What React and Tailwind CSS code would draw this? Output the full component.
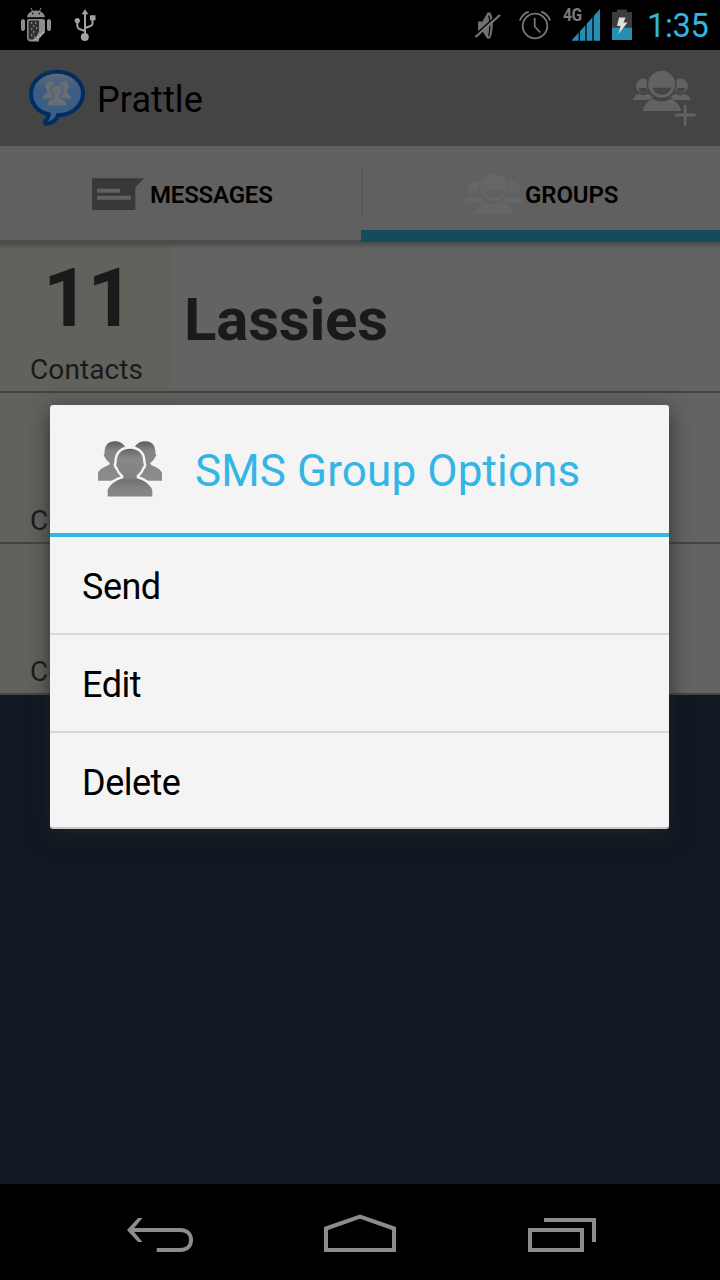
function PeopleIcon({ className, plus, fill, gap }) {
  return (
    <svg className={className} viewBox="632 68 64 60" width="64" height="60">
      <g fill={fill}>
        <circle cx="643.3" cy="85.8" r="7.3" />
        <circle cx="680.7" cy="85.8" r="7.3" />
        <path d="M632.500 100c2-5 6-6.300 7.500-6.300 3 2.300 5 2 7 0 3 .8 5 2 6 3l-3 3.300zM691 100c-2-5-6-6.300-7.500-6.300-3 2.300-5 2-7 0-3 .8-5 2-6 3l3 3.300z" />
        <circle cx="661.7" cy="84" r="15" fill={gap} />
        <circle cx="661.7" cy="84.2" r="13.500" />
        <path d="M643 111c1-6 5-11 10-12.300 5 3.500 12.500 3.500 17.500 0 5 1.300 9.500 6.300 10.500 12.300z" />
      </g>
      <g fill={gap}>
        <path d="M652.800 87.800h18.400c-1 4-4.500 7-9.200 7s-8.200-3-9.200-7zM638.500 88h8.200l1 3.300c-1 .8-2.500 1.200-4 1.200-2.700 0-4.700-2-5.200-4.500zM685.500 88h-8.200l-1 3.300c1 .8 2.500 1.200 4 1.200 2.700 0 4.700-2 5.200-4.500z" />
      </g>
      {plus && <path d="M675 115h20.500M685.200 105v20.700" stroke={fill} strokeWidth="2.800" />}
    </svg>
  );
}

function Trio({ className }) {
  return (
    <svg className={className} viewBox="0 0 64 57" width="64" height="57">
      <defs>
        <linearGradient id="trio-side" x1="0" y1="0" x2="0" y2="1">
          <stop offset="0" stopColor="#5e5e5e" />
          <stop offset=".25" stopColor="#858585" />
          <stop offset="1" stopColor="#8c8c8c" />
        </linearGradient>
        <linearGradient id="trio-front" x1="0" y1="0" x2="0" y2="1">
          <stop offset="0" stopColor="#666" />
          <stop offset=".2" stopColor="#888" />
          <stop offset=".6" stopColor="#828282" />
          <stop offset=".66" stopColor="#727272" />
          <stop offset=".85" stopColor="#848484" />
          <stop offset="1" stopColor="#888" />
        </linearGradient>
      </defs>
      <g fill="url(#trio-side)">
        <path d="M0 39.700v-8c2-4 6-5.500 11-8 1-.8 1-1.500 0-2.500-2-1.500-4-4-5-6.500-.5-1-.3-1.500.5-2C6.500 4 10 .3 16.500.3 21 .3 25 2 27 6v20l-3 13.700z" />
        <path d="M64 39.700v-8c-2-4-6-5.500-11-8-1-.8-1-1.500 0-2.500 2-1.500 4-4 5-6.500.5-1 .3-1.500-.5-2C57.500 4 54 .3 47.500.3 43 .3 39 2 37 6v20l3 13.700z" />
      </g>
      <path
        d="M9.700 55.500V49c2-5.500 8-9.500 14.800-11.500 1.200-1 1.200-2.200.5-3.200-3-2.500-4.500-5-5.500-8-1.500-1-1.700-3-.7-4.800C18.500 12.500 24 7.800 32 7.800S45.500 12.500 45.200 21.500c1 1.800.8 3.800-.7 4.800-1 3-2.500 5.500-5.500 8-.7 1-.7 2.200.5 3.200C46.300 39.500 52.300 43.500 54.300 49v6.500z"
        fill="url(#trio-front)"
        stroke="#f4f4f4"
        strokeWidth="5"
        paintOrder="stroke"
      />
    </svg>
  );
}

function StatusBar() {
  return (
    <header className="flex h-[50px] shrink-0 items-center bg-black">
      <svg width="110" height="50" viewBox="0 0 110 50">
        <g fill="#8c8c8c">
          <path d="M27 17.300c.5-4 4-6.800 9-6.800s8.500 2.800 9 6.800zM21 20.500q2-3 4 0v9q-2 3-4 0zM47 20.500q2-3 4 0v9q-2 3-4 0z" />
          <path d="M31 8l2 4M41 8l-2 4" stroke="#8c8c8c" strokeWidth="1" />
          <path d="M27 21q0-2 2-2h14q2 0 2 2v11l-6 7v2.500h-9q-3-1-3-4z" />
        </g>
        <path d="M30 20.500h9v11l-4 8h-5q-1.500 0-1.500-2V22q0-1.500 1.500-1.500z" fill="#303030" />
        <path d="M31 23h1.300M35 23h1.300M33 26h1.300M36 28h1.300M31 29h1.300M33 32h1.300M31 35h1.300M34 37h1.300" stroke="#999" strokeWidth="1.300" />
        <path d="M44 32l-11 9" stroke="#b0b0b0" strokeWidth="2" strokeDasharray="2.500 1" />
        <path d="M32 13.500h1.300M38.500 13.500h1.300" stroke="#000" strokeWidth="1.300" />
        <g fill="none" stroke="#a2a2a2" strokeWidth="2">
          <path d="M85 14v23M77.300 21v5q0 2 2 3l5.700 2M92.500 18v6q0 1-2 2L85 28" />
        </g>
        <path d="M85 9.300l3.500 5h-7zM90 15.300h5.500v5H90z" fill="#a2a2a2" />
        <circle cx="77.300" cy="20.500" r="2.600" fill="#a2a2a2" />
        <circle cx="84.800" cy="37" r="4" fill="#a2a2a2" />
      </svg>
      <div className="flex-1" />
      <svg width="88" height="50" viewBox="470 0 88 50">
        <path d="M478 21.500h4.500l5-9h3q2.500 5 2.300 13t-2.800 13h-3l-5-8h-4z" fill="#707070" />
        <path d="M488.500 15.500q1.500 3 1.300 10.500t-1.300 10" fill="none" stroke="#000" strokeWidth="1.200" />
        <path d="M474.500 35.500L499 13.500" stroke="#000" strokeWidth="1.500" />
        <path d="M475.500 37L500 15" stroke="#777" strokeWidth="2.200" />
        <g fill="none" stroke="#777" strokeWidth="1.800">
          <circle cx="535" cy="26" r="12.300" />
          <path d="M534.700 18v8.500l5.500 6M519.800 20.500q3-7 9-8.800M550.200 20.500q-3-7-9-8.800" />
        </g>
      </svg>
      <div className="flex w-[46px] items-start">
        <span className="ml-[5px] mt-[-1px] w-[22px] shrink-0 origin-left scale-x-[0.84] text-[18.5px] leading-[18px] font-bold tracking-[-0.5px] text-[#7b7b7b]">4G</span>
        <svg className="-ml-[14px] shrink-0" width="30" height="36" viewBox="571 7 30 36">
          <path d="M572 40.700V40L600 9v31.700z" fill="#278db3" />
          <path d="M579.300 30v11M586 20v21M593 15v26" stroke="#000" strokeWidth="1.300" />
        </svg>
      </div>
      <svg width="32" height="50" viewBox="604 0 32 50">
        <path d="M612 12h5V9.500h10V12h5v16h-20z" fill="#3c3c3c" />
        <path d="M612 27.700h20V40h-20z" fill="#278db3" />
        <path d="M619 17.500h6.500l-2 5h4l-9 11.500 2-8h-3.500z" fill="#dedede" />
      </svg>
      <span className="ml-[11px] mr-[12px] mt-[2px] w-[61px] whitespace-nowrap text-[32.500px] leading-[50px] tracking-[-0.3px] text-[#33b5e5]">1:35</span>
    </header>
  );
}

function ActionBar() {
  return (
    <div className="flex h-24 shrink-0 items-center bg-[#444]">
      <div className="ml-7 mt-[-1px] h-[58px] w-[58px]">
        <svg width="58" height="58" viewBox="28 69 58 58">
          <defs>
            <linearGradient id="bubble" x1="0" y1="0" x2="0" y2="1">
              <stop offset="0" stopColor="#626a76" />
              <stop offset=".35" stopColor="#3c5c83" />
              <stop offset="1" stopColor="#3a6384" />
            </linearGradient>
          </defs>
          <path d="M57 71.800c15 0 26 9.700 26 21.700s-11 21.500-25 21.800c-1 3-5 8-11.500 8.700-2 0-2-1.500-1-3 2.500-2.500 3.500-4.500 3.300-6.700C38 112.500 31 104 31 93.500c0-12 11-21.700 26-21.700z" fill="url(#bubble)" stroke="#002e63" strokeWidth="4" />
          <svg x="43" y="80.500" width="28" height="26" viewBox="0 0 64 57">
            <path fill="#696d72" d="M0 40v-6l10-8-5-12C6 4 11 .5 16.500.5S27 3 29 8h6c2-5 7-7.500 12.500-7.500S58 4 59 14l-5 12 10 8v6z" />
            <path fill="#696d72" stroke="#46617f" strokeWidth="3" d="M9.500 57v-7c3-7 9-9 14-11.500l1-4-5-8-.5-5C18.500 12 25 7.500 32 7.500S45.500 12 45 21.500l-.5 5-5 8 1 4c5 2.500 11 4.500 14 11.500v7z" />
          </svg>
        </svg>
      </div>
      <h1 className="ml-[11px] mt-[3px] flex-1 text-[36px] leading-[48px] tracking-[0.1px] text-black">Prattle</h1>
      <PeopleIcon className="mr-6" plus fill="#626262" gap="#444" />
    </div>
  );
}

function Tabs() {
  return (
    <nav className="flex h-24 shrink-0 bg-[#606060] text-[24px] font-semibold leading-[96px] text-black">
      <div className="flex w-[361px] items-center border-b-[2px] border-[#4d4d4d]">
        <svg className="ml-[92px] mt-[2px]" width="52" height="33" viewBox="92 178 52 33">
          <path d="M92 178.300h52l-8.700 9V210H92z" fill="#383838" />
          <path d="M97 190.800h23M97 197.800h34" stroke="#606060" strokeWidth="4" />
        </svg>
        <span className="ml-[6px] mt-[3px] tracking-[-0.2px]">MESSAGES</span>
      </div>
      <div className="flex flex-1 items-center border-b-[12px] border-[#164a5e]">
        <div className="mt-[12px] h-12 w-[2px] bg-[#575757]" />
        <PeopleIcon className="ml-[101px] mt-[26px] shrink-0" fill="#666" gap="#606060" />
        <span className="ml-[-3px] mt-[13px] tracking-[-0.1px]">GROUPS</span>
      </div>
    </nav>
  );
}

function GroupRow({ count, name }) {
  return (
    <li className="flex h-[151px] border-b-2 border-[#444]">
      <div className="flex w-[173px] flex-col bg-[#61625c] text-[#1a1a1a]">
        <b className="mt-[8px] h-[98px] pl-[43px] text-[81px] leading-[98px] tracking-[-2px]">{count}</b>
        <span className="mt-[1px] pl-[30px] text-[28px] leading-[42px] tracking-[0.1px]">Contacts</span>
      </div>
      <b className="flex-1 pl-[11px] text-[60px] leading-[155px] tracking-[-0.2px] text-[#1a1a1a]">{name}</b>
    </li>
  );
}

function Dialog() {
  return (
    <section className="absolute left-[50px] top-[405px] w-[619px] rounded-[3px] border-b-2 border-[#c8c9c8] bg-[#f4f4f4] shadow-[0_6px_20px_rgba(32,36,38,0.8)]">
      <div className="flex h-[132px] border-b-4 border-[#33b5e5]">
        <Trio className="ml-12 mt-[36px]" />
        <h2 className="ml-[33px] mt-[2px] whitespace-nowrap text-[44px] leading-[128px] tracking-[0.13px] text-[#33b5e5]">SMS Group Options</h2>
      </div>
      <ul className="text-[36px] leading-[100px] tracking-[-0.5px] text-black">
        <li className="h-[98px] border-b-2 border-[#d8d8d8] pl-8">Send</li>
        <li className="h-[98px] border-b-2 border-[#d8d8d8] pl-8">Edit</li>
        <li className="h-[94px] pl-8">Delete</li>
      </ul>
    </section>
  );
}

function NavBar() {
  return (
    <footer className="flex h-24 shrink-0 items-center bg-black">
      <svg width="720" height="96" viewBox="0 1184 720 96" fill="none" stroke="#8c8c8c" strokeWidth="4">
        <path d="M130 1230h50c8 0 11 5 11 10s-3 10-11 10h-23.300" />
        <path d="M138 1218h4.500l-10 12 10 12H138l-11-12z" fill="#8c8c8c" stroke="none" />
        <path d="M326 1250v-21.500l34-12 34 12V1250z" />
        <path d="M530 1230h52v20h-52zM544 1220h50v22" />
      </svg>
    </footer>
  );
}

export default function App() {
  return (
    <div className="relative flex h-[1280px] w-[720px] flex-col overflow-hidden bg-[#111822] font-[Roboto,sans-serif]">
      <StatusBar />
      <ActionBar />
      <Tabs />
      <main className="relative flex-1 bg-[#111822]">
        <div className="absolute inset-x-0 top-0 h-[7px] bg-linear-to-b from-black/25 to-transparent" />
        <ul className="bg-[#636361]">
          <GroupRow count="11" name="Lassies" />
          <GroupRow />
          <GroupRow />
        </ul>
      </main>
      <NavBar />
      <Dialog />
    </div>
  );
}
